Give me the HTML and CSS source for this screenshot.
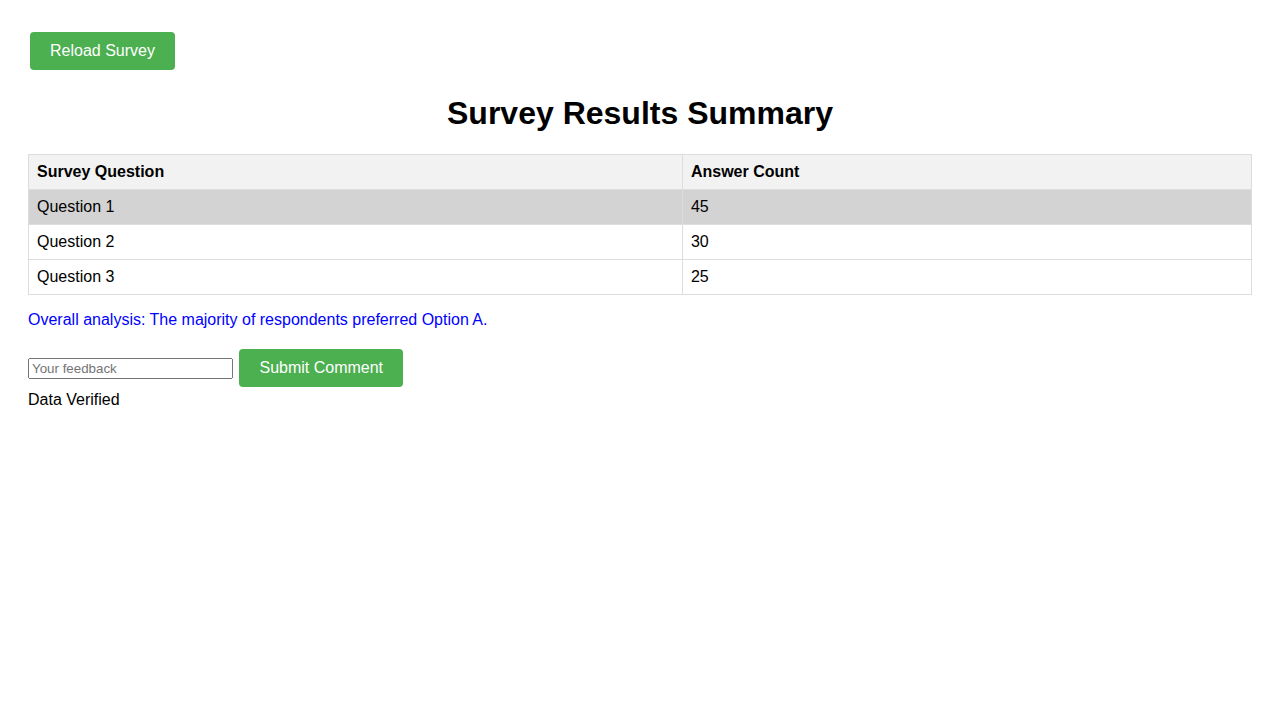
FILE: index.html
```html
<!DOCTYPE html>
<html>
<head>
<meta charset="utf-8">
<link rel="stylesheet" href="styles.css">
</head>
<body>
<div class="container">
  <button class="btn">Reload Survey</button>
  <h1 class="title">Survey Results Summary</h1>
  <table class="results">
    <thead>
      <tr><th>Survey Question</th><th>Answer Count</th></tr>
    </thead>
    <tbody>
      <tr class="highlight"><td>Question 1</td><td>45</td></tr>
      <tr><td>Question 2</td><td>30</td></tr>
      <tr><td>Question 3</td><td>25</td></tr>
    </tbody>
  </table>
  <p class="analysis">Overall analysis: The majority of respondents preferred Option A.</p>
  <div class="feedback">
    <input class="feedback-input" type="text" placeholder="Your feedback">
    <button class="btn">Submit Comment</button>
  </div>
  <div class="status">Data Verified</div>
</div>
</body>
</html>
```
FILE: styles.css
```css
body {
  margin: 0;
  font-family: "Liberation Sans", Arial, sans-serif;
  font-size: 16px;
  color: #000;
  background: #fff;
}
.container {
  padding: 28px;
}
.btn {
  margin: 4px 2px;
  padding: 10px 20px;
  background: #4caf50;
  color: #fff;
  border: none;
  border-radius: 4px;
  font-family: "Liberation Sans", Arial, sans-serif;
  font-size: 16px;
  cursor: pointer;
}
.title {
  text-align: center;
  font-size: 32px;
  margin: 21.44px 0;
}
.results {
  width: 100%;
  border-collapse: collapse;
}
.results th,
.results td {
  border: 1px solid #ddd;
  padding: 8px;
  text-align: left;
}
.results th {
  background: #f2f2f2;
}
.results .highlight {
  background: #d3d3d3;
}
.analysis {
  color: #0000ff;
  margin: 16px 0;
}
.feedback-input {
  width: 197px;
  font-family: "Liberation Sans", Arial, sans-serif;
  font-size: 13.33px;
}
```
